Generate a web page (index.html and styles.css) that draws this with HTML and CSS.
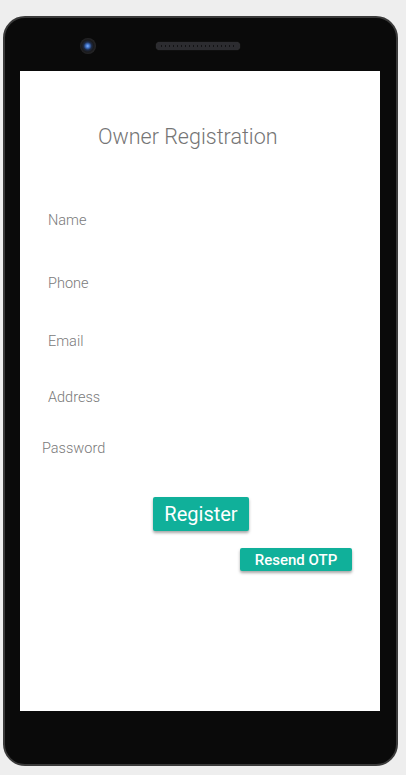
FILE: index.html
```html
<!DOCTYPE html>
<html>
<head>
<meta charset="utf-8">
<link rel="stylesheet" href="styles.css">
</head>
<body>
<div class="phone">
  <div class="bezel-top">
    <span class="camera"></span>
    <span class="speaker"></span>
  </div>
  <div class="screen">
    <h1 class="title">Owner Registration</h1>
    <div class="fields">
      <div class="field f-name">Name</div>
      <div class="field f-phone">Phone</div>
      <div class="field f-email">Email</div>
      <div class="field f-address">Address</div>
      <div class="field f-password">Password</div>
    </div>
    <button class="btn btn-register">Register</button>
    <button class="btn btn-resend">Resend OTP</button>
  </div>
</div>
</body>
</html>
```

FILE: styles.css
```css
html, body {
  margin: 0;
  padding: 0;
  background: #eeeeee;
}
body {
  font-family: Roboto, "Liberation Sans", sans-serif;
  padding-top: 16px;
  padding-left: 3px;
}
.phone {
  box-sizing: border-box;
  width: 395px;
  height: 750px;
  background: #0a0a0a;
  border: 2px solid #3a3a3a;
  border-radius: 22px;
  padding: 0 0 0 15px;
}
.bezel-top {
  height: 53px;
  display: flex;
  align-items: center;
  padding-top: 2px;
  box-sizing: border-box;
}
.camera {
  width: 16px;
  height: 16px;
  margin-left: 60px;
  border-radius: 50%;
  background: radial-gradient(circle at 48% 50%, #7fb2ff 0, #3e6fc4 2px, #1d2a45 4px, #1a1a1c 6px, #262628 8px);
}
.speaker {
  margin-left: 60px;
  width: 84px;
  height: 8px;
  border-radius: 4px;
  background:
    repeating-linear-gradient(90deg, #121214 0 1px, transparent 1px 4px) 5px 3px / 74px 2px no-repeat,
    #2c2c30;
  box-shadow: 0 0 1px #444;
}
.screen {
  width: 360px;
  height: 640px;
  background: #ffffff;
  display: flex;
  flex-direction: column;
  align-items: flex-start;
}
.title {
  margin: 54px 0 0 78px;
  font-size: 21.5px;
  line-height: 24px;
  font-weight: 300;
  color: #757575;
}
.fields {
  margin-top: 63px;
  display: flex;
  flex-direction: column;
}
.field {
  font-size: 14.5px;
  line-height: 18px;
  font-weight: 300;
  color: #7a7a7a;
  margin-left: 28px;
}
.f-phone { margin-top: 45px; }
.f-email { margin-top: 40px; }
.f-address { margin-top: 38px; }
.f-password { margin-top: 33px; margin-left: 22px; }
.btn {
  border: none;
  border-radius: 2px;
  background: #10b09a;
  color: #ffffff;
  font-family: Roboto, "Liberation Sans", sans-serif;
  box-shadow: 0 2px 3px rgba(0, 0, 0, 0.35);
  padding: 0;
}
.btn-register {
  margin: 39px 0 0 133px;
  width: 96px;
  height: 34px;
  font-size: 20px;
  font-weight: 400;
}
.btn-resend {
  margin: 17px 0 0 220px;
  width: 112px;
  height: 23px;
  font-size: 15px;
  font-weight: 500;
}
```
